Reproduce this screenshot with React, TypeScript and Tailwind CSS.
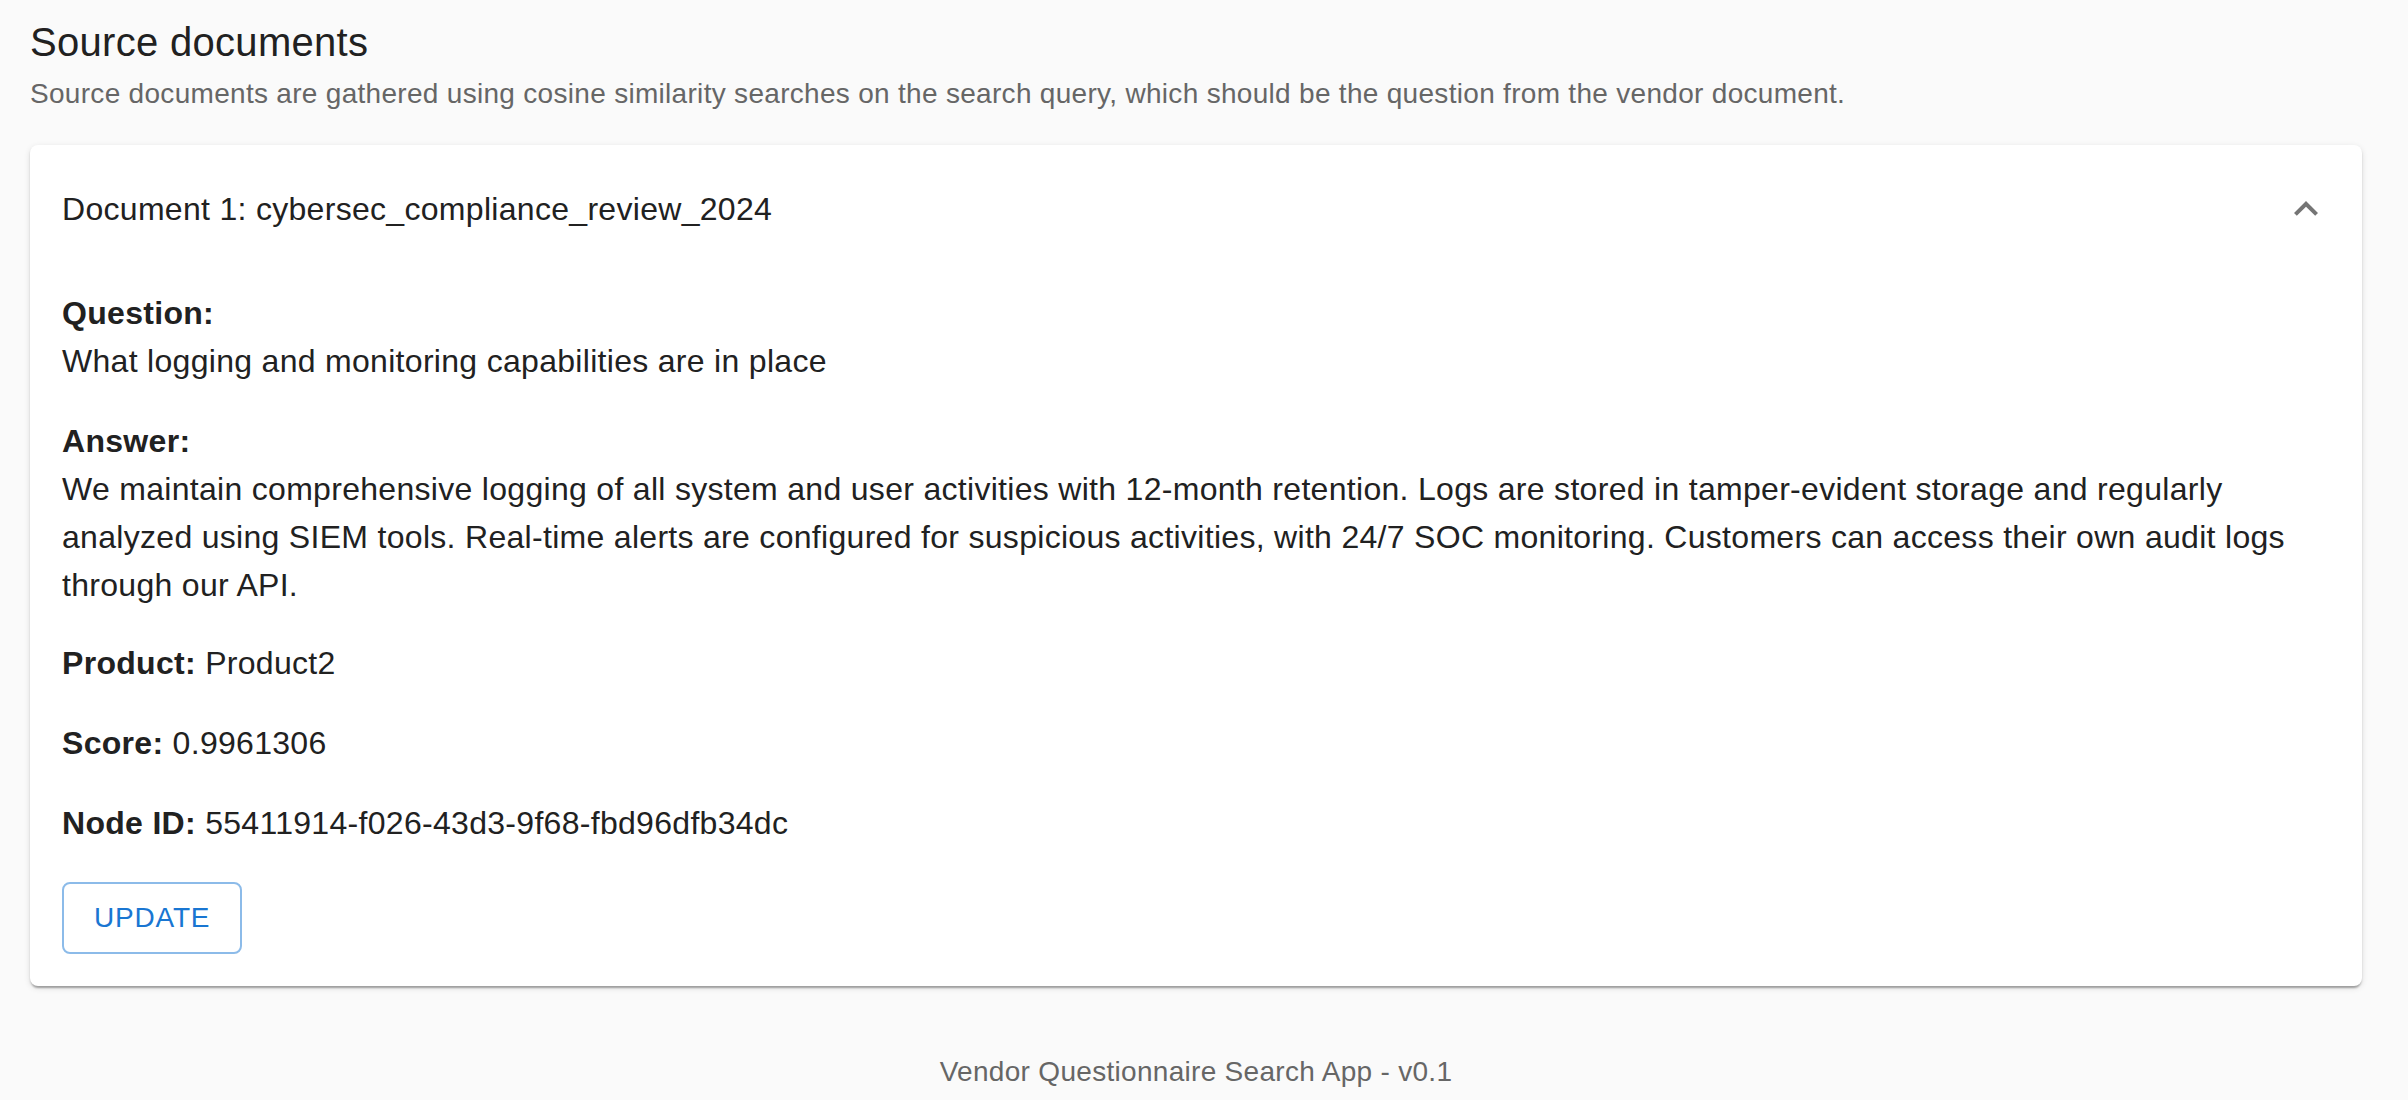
import React from "react";

export default function App() {
  return (
    <div className="min-h-screen bg-[#fafafa] font-['Liberation_Sans',Arial,sans-serif] pl-[30px] pr-[46px] pt-[10px] pb-[10px]">
      <h2 className="text-[40px] leading-[64px] text-[#212121] tracking-[0.3px] font-normal">
        Source documents
      </h2>
      <p className="text-[28px] leading-[40px] text-[#666666] tracking-[0.3px]">
        Source documents are gathered using cosine similarity searches on the search query, which should be the question from the vendor document.
      </p>

      <div className="mt-[31px] bg-white rounded-[8px] shadow-[0_4px_2px_-2px_rgba(0,0,0,0.2),0_2px_2px_0_rgba(0,0,0,0.14),0_2px_6px_0_rgba(0,0,0,0.12)]">
        <div className="flex items-center h-[128px] px-[32px]">
          <div className="flex-1 text-[32px] leading-[48px] text-[#212121] tracking-[0.3px]">
            Document 1: cybersec_compliance_review_2024
          </div>
          <svg viewBox="0 0 24 24" className="w-[48px] h-[48px] fill-[#757575]">
            <path d="M12 8l-6 6 1.41 1.41L12 10.83l4.59 4.58L18 14z" />
          </svg>
        </div>

        <div className="px-[32px] pt-[16px] pb-[32px] text-[32px] leading-[48px] text-[#212121] tracking-[0.3px]">
          <div>
            <div className="font-bold">Question:</div>
            <div>What logging and monitoring capabilities are in place</div>
          </div>
          <div className="mt-[32px]">
            <div className="font-bold">Answer:</div>
            <div>
              We maintain comprehensive logging of all system and user activities with 12-month retention. Logs are stored in tamper-evident storage and regularly analyzed using SIEM tools. Real-time alerts are configured for suspicious activities, with 24/7 SOC monitoring. Customers can access their own audit logs through our API.
            </div>
          </div>
          <div className="mt-[30px]">
            <span className="font-bold">Product:</span> Product2
          </div>
          <div className="mt-[32px]">
            <span className="font-bold">Score:</span> 0.9961306
          </div>
          <div className="mt-[32px]">
            <span className="font-bold">Node ID:</span> 55411914-f026-43d3-9f68-fbd96dfb34dc
          </div>
          <button className="mt-[35px] h-[72px] px-[30px] border-2 border-[#8cbbe9] rounded-[8px] text-[28px] leading-[40px] text-[#1976d2] tracking-[0.8px] uppercase bg-white">
            Update
          </button>
        </div>
      </div>

      <footer className="mt-[66px] text-center text-[28px] leading-[40px] text-[#666666] tracking-[0.3px]">
        Vendor Questionnaire Search App - v0.1
      </footer>
    </div>
  );
}
